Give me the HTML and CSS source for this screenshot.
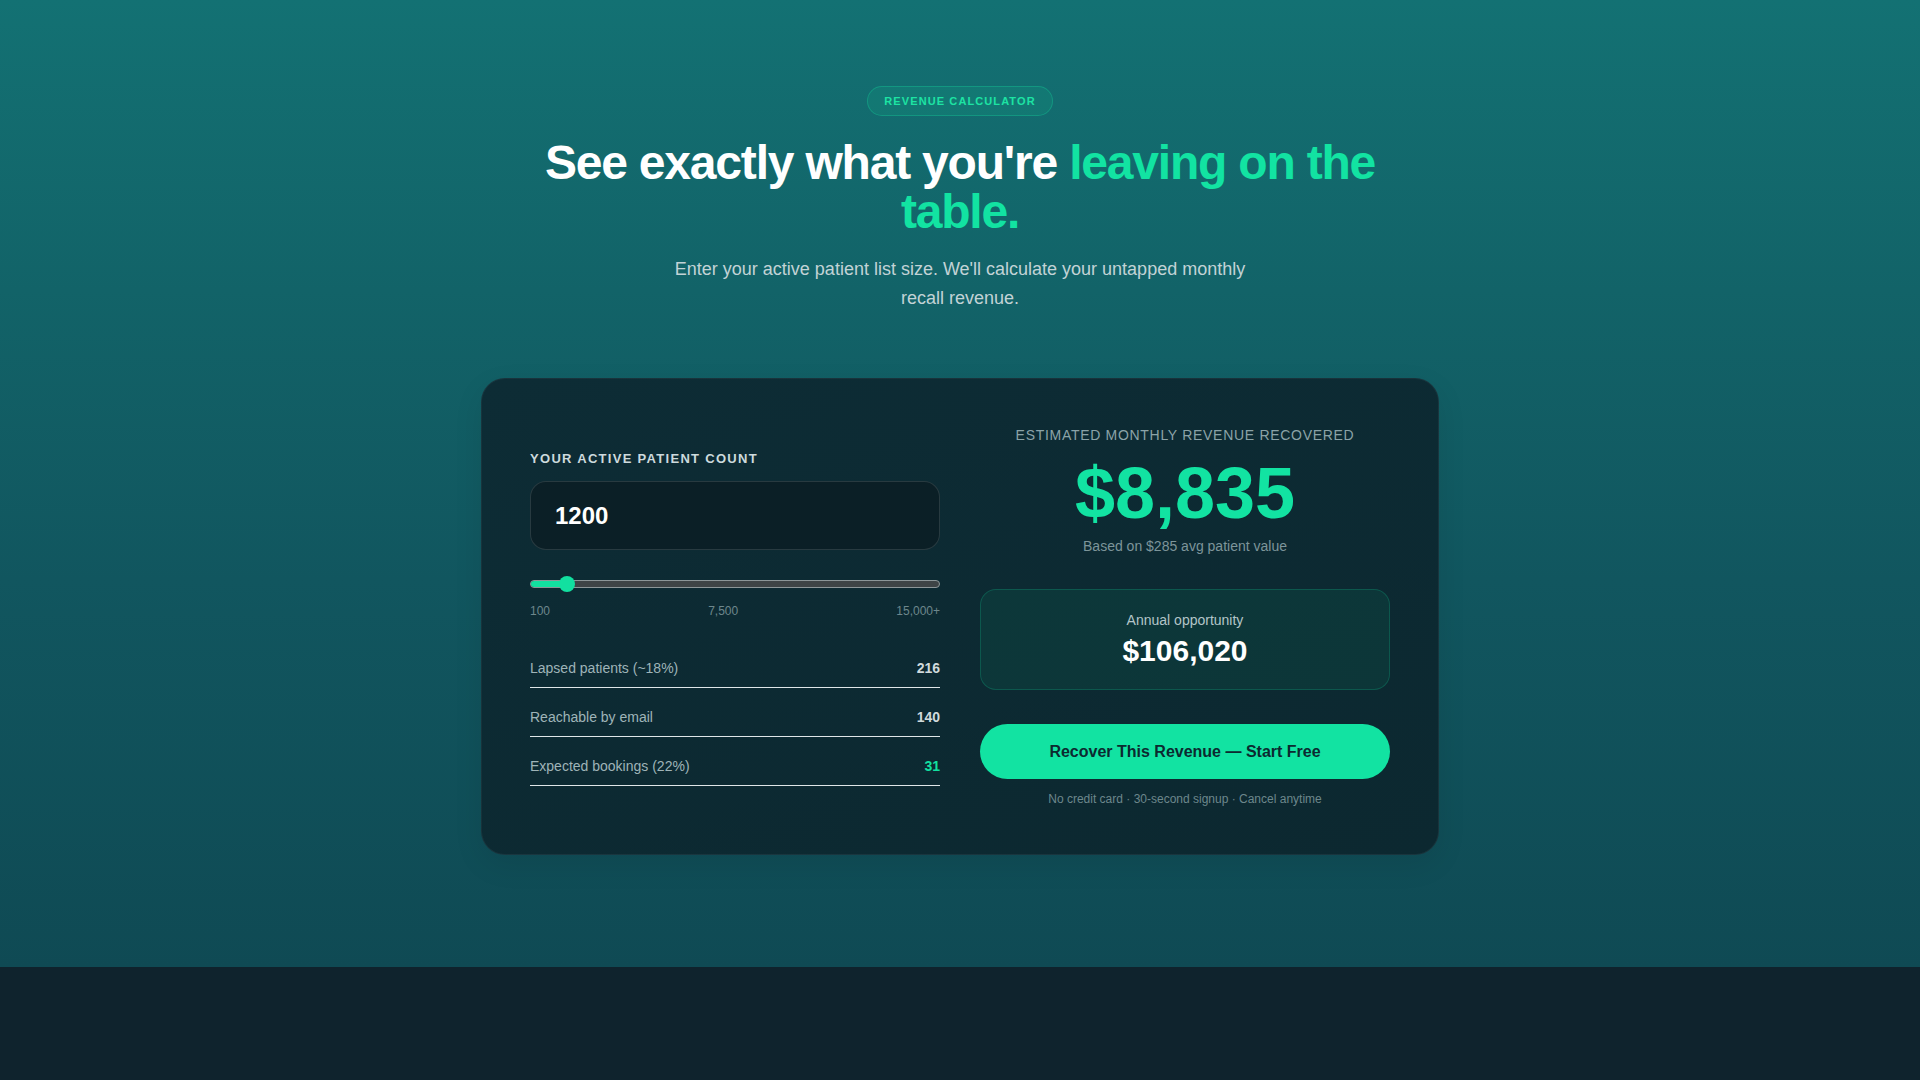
FILE: index.html
```html
<!DOCTYPE html>
<html lang="en">
<head>
<meta charset="utf-8">
<title>Revenue Calculator</title>
<link rel="stylesheet" href="styles.css">
</head>
<body>
<section class="hero">
  <div class="badge">REVENUE CALCULATOR</div>
  <h1 class="title">See exactly what you're <span class="accent">leaving on the table.</span></h1>
  <p class="subtitle">Enter your active patient list size. We'll calculate your untapped monthly recall revenue.</p>

  <div class="card">
    <div class="col-left">
      <div class="field-label">YOUR ACTIVE PATIENT COUNT</div>
      <div class="count-input">1200</div>
      <div class="slider">
        <div class="track">
          <div class="fill" style="width: 37px"></div>
        </div>
        <div class="thumb" style="left: 29px"></div>
      </div>
      <div class="ticks">
        <span>100</span>
        <span>7,500</span>
        <span>15,000+</span>
      </div>
      <div class="rows">
        <div class="row"><span class="row-label">Lapsed patients (~18%)</span><span class="row-value">216</span></div>
        <div class="row"><span class="row-label">Reachable by email</span><span class="row-value">140</span></div>
        <div class="row"><span class="row-label">Expected bookings (22%)</span><span class="row-value green">31</span></div>
      </div>
    </div>
    <div class="col-right">
      <div class="est-label">ESTIMATED MONTHLY REVENUE RECOVERED</div>
      <div class="big-number">$8,835</div>
      <div class="based">Based on $285 avg patient value</div>
      <div class="annual">
        <div class="annual-label">Annual opportunity</div>
        <div class="annual-value">$106,020</div>
      </div>
      <button class="cta">Recover This Revenue — Start Free</button>
      <div class="fine">No credit card · 30-second signup · Cancel anytime</div>
    </div>
  </div>
</section>
<footer class="footer"></footer>
</body>
</html>
```

FILE: styles.css
```css
* { box-sizing: border-box; }

html, body {
  margin: 0;
  padding: 0;
}

body {
  font-family: "Liberation Sans", Arial, sans-serif;
  background: #0f232d;
  color: #ffffff;
  min-height: 1080px;
}

.hero {
  display: flex;
  flex-direction: column;
  align-items: center;
  padding: 86px 0 112px;
  background: linear-gradient(180deg, #137173 0%, #126368 30%, #11565f 60%, #0f4a54 100%);
}

.badge {
  height: 30px;
  padding: 0 16px;
  display: flex;
  align-items: center;
  border-radius: 15px;
  border: 1px solid rgba(20, 230, 160, 0.28);
  background: rgba(20, 230, 160, 0.1);
  color: #1de3a3;
  font-size: 11px;
  font-weight: 700;
  letter-spacing: 0.1em;
}

.title {
  margin: 22px 0 0;
  max-width: 880px;
  text-align: center;
  font-size: 48px;
  line-height: 49px;
  font-weight: 700;
  letter-spacing: -0.025em;
  color: #ffffff;
}

.accent { color: #12e3a2; }

.subtitle {
  margin: 19px 0 0;
  max-width: 590px;
  text-align: center;
  font-size: 18px;
  line-height: 29px;
  color: #c2d3d6;
}

.card {
  margin-top: 65px;
  width: 958px;
  padding: 48px;
  border-radius: 24px;
  background: linear-gradient(160deg, #0d2c35 0%, #0c2830 100%);
  border: 1px solid rgba(255, 255, 255, 0.05);
  box-shadow: 0 10px 30px rgba(0, 0, 0, 0.08);
  display: grid;
  grid-template-columns: 1fr 1fr;
  column-gap: 40px;
  align-items: center;
}

/* left column */
.col-left {
  padding-top: 4px;
}

.field-label {
  font-size: 13px;
  line-height: 16px;
  font-weight: 700;
  letter-spacing: 0.1em;
  color: #cddadd;
}

.count-input {
  margin-top: 14px;
  height: 69px;
  padding: 0 24px;
  display: flex;
  align-items: center;
  border-radius: 16px;
  background: #0b1f26;
  border: 1px solid rgba(255, 255, 255, 0.12);
  font-size: 24px;
  font-weight: 700;
  color: #ffffff;
}

.slider {
  position: relative;
  margin-top: 26px;
  height: 16px;
  display: flex;
  align-items: center;
}

.track {
  width: 100%;
  height: 8px;
  border-radius: 4px;
  background: #3e4446;
  border: 1px solid #8c9698;
  overflow: hidden;
}

.fill {
  height: 100%;
  background: #12e0a0;
}

.thumb {
  position: absolute;
  top: 0;
  width: 16px;
  height: 16px;
  border-radius: 50%;
  background: #12e0a0;
}

.ticks {
  margin-top: 12px;
  display: flex;
  justify-content: space-between;
  font-size: 12px;
  line-height: 14px;
  color: #6d878c;
}

.rows {
  margin-top: 0;
}

.row {
  display: flex;
  justify-content: space-between;
  align-items: center;
  padding: 21px 0 10px;
  border-bottom: 1px solid #dfe6e8;
  font-size: 14px;
  line-height: 17px;
}

.row:first-child {
  padding-top: 42px;
}

.row-label { color: #9fb4b8; }

.row-value {
  font-weight: 700;
  color: #d0dadc;
}

.row-value.green { color: #12e0a0; }

/* right column */
.col-right {
  display: flex;
  flex-direction: column;
  align-items: stretch;
  text-align: center;
}

.est-label {
  font-size: 14px;
  line-height: 16px;
  letter-spacing: 0.05em;
  color: #8ba3a8;
}

.big-number {
  margin-top: 14px;
  font-size: 72px;
  line-height: 72px;
  font-weight: 700;
  color: #12e3a2;
}

.based {
  margin-top: 9px;
  font-size: 14px;
  line-height: 16px;
  color: #7d959a;
}

.annual {
  margin-top: 35px;
  height: 101px;
  display: flex;
  flex-direction: column;
  align-items: center;
  justify-content: center;
  border-radius: 16px;
  background: rgba(18, 227, 162, 0.07);
  border: 1px solid rgba(18, 227, 162, 0.2);
}

.annual-label {
  font-size: 14px;
  line-height: 16px;
  color: #b3c5c8;
}

.annual-value {
  margin-top: 6px;
  font-size: 30px;
  line-height: 34px;
  font-weight: 700;
  color: #ffffff;
}

.cta {
  margin-top: 34px;
  height: 55px;
  width: 100%;
  border: none;
  border-radius: 28px;
  background: #12e3a2;
  color: #0c2a30;
  font-family: "Liberation Sans", Arial, sans-serif;
  font-size: 16px;
  font-weight: 700;
  cursor: pointer;
}

.fine {
  margin-top: 13px;
  font-size: 12px;
  line-height: 14px;
  color: #6c878c;
}

.footer {
  height: 113px;
  background: #0f232d;
}
```
